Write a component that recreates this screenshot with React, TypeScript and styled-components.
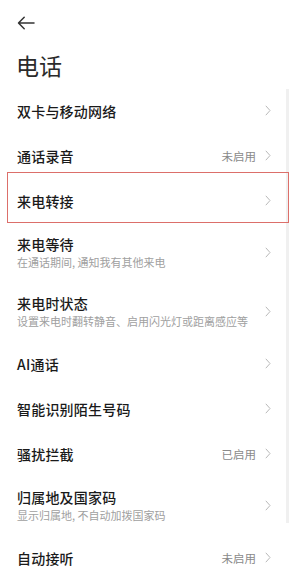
import React from "react";
import styled, { createGlobalStyle } from "styled-components";

const GlobalStyle = createGlobalStyle`
  html, body {
    margin: 0;
    padding: 0;
    background: #fff;
  }
  body {
    font-family: "Noto Sans CJK SC", "Noto Sans", sans-serif;
    -webkit-font-smoothing: antialiased;
  }
`;

const Page = styled.div`
  position: relative;
  width: 293px;
  height: 584px;
  overflow: hidden;
  background: #fff;
`;

const TopBar = styled.div`
  display: flex;
  align-items: center;
  height: 46px;
  padding-left: 17px;
  box-sizing: border-box;
`;

const BackButton = styled.button`
  display: flex;
  align-items: center;
  padding: 0;
  border: 0;
  background: none;
  cursor: pointer;
`;

const Title = styled.h1`
  display: flex;
  align-items: center;
  height: 42px;
  margin: 0;
  padding: 0 0 5px 16px;
  box-sizing: border-box;
  font-size: 23px;
  font-weight: 400;
  color: #2b2b2b;
`;

const List = styled.ul`
  list-style: none;
  margin: 0;
  padding: 0;
`;

const Row = styled.li<{ $tall?: boolean; $marked?: boolean }>`
  position: relative;
  display: flex;
  align-items: center;
  justify-content: space-between;
  height: ${(p) => (p.$tall ? "59px" : "45px")};
  padding: 0 22px 0 17px;
  box-sizing: border-box;

  &::after {
    content: "";
    display: ${(p) => (p.$marked ? "block" : "none")};
    position: absolute;
    z-index: 2;
    top: -6px;
    left: 7px;
    right: 4px;
    bottom: 0;
    border: 1px solid #dc6f6a;
  }
`;

const TextBlock = styled.div`
  display: flex;
  flex-direction: column;
  min-width: 0;
`;

const ItemTitle = styled.span`
  font-size: 14px;
  line-height: 18px;
  font-weight: 500;
  color: #1a1a1a;
  letter-spacing: 0.2px;
`;

const ItemHint = styled.span`
  margin-top: 1px;
  font-size: 11px;
  line-height: 16px;
  color: #a0a0a0;
  white-space: nowrap;
`;

const Trailing = styled.div`
  display: flex;
  align-items: center;
  gap: 9px;
  flex-shrink: 0;
`;

const Value = styled.span`
  font-size: 11.5px;
  color: #8a8a8a;
`;

const ScrollThumb = styled.div`
  position: absolute;
  z-index: 1;
  top: 89px;
  left: 286px;
  width: 3px;
  height: 434px;
  background: #f0f0f0;
`;

const Chevron = () => (
  <svg width="6" height="11" viewBox="0 0 6 11" fill="none">
    <polyline
      points="0.8,0.8 5,5.5 0.8,10.2"
      stroke="#b8b8b8"
      strokeWidth="1"
      strokeLinejoin="round"
    />
  </svg>
);

const BackArrow = () => (
  <svg width="18" height="14" viewBox="0 0 18 14" fill="none">
    <path
      d="M17 7H1.6M7.2 1.3L1.5 7l5.7 5.7"
      stroke="#333"
      strokeWidth="1.5"
      strokeLinecap="round"
      strokeLinejoin="round"
    />
  </svg>
);

type Item = {
  title: string;
  hint?: string;
  value?: string;
  marked?: boolean;
};

const items: Item[] = [
  { title: "双卡与移动网络" },
  { title: "通话录音", value: "未启用" },
  { title: "来电转接", marked: true },
  { title: "来电等待", hint: "在通话期间, 通知我有其他来电" },
  { title: "来电时状态", hint: "设置来电时翻转静音、启用闪光灯或距离感应等" },
  { title: "AI通话" },
  { title: "智能识别陌生号码" },
  { title: "骚扰拦截", value: "已启用" },
  { title: "归属地及国家码", hint: "显示归属地, 不自动加拨国家码" },
  { title: "自动接听", value: "未启用" },
];

export default function App() {
  return (
    <Page>
      <GlobalStyle />
      <TopBar>
        <BackButton aria-label="返回">
          <BackArrow />
        </BackButton>
      </TopBar>
      <Title>电话</Title>
      <List>
        {items.map((item) => (
          <Row key={item.title} $tall={!!item.hint} $marked={item.marked}>
            <TextBlock>
              <ItemTitle>{item.title}</ItemTitle>
              {item.hint && <ItemHint>{item.hint}</ItemHint>}
            </TextBlock>
            <Trailing>
              {item.value && <Value>{item.value}</Value>}
              <Chevron />
            </Trailing>
          </Row>
        ))}
      </List>
      <ScrollThumb />
    </Page>
  );
}
